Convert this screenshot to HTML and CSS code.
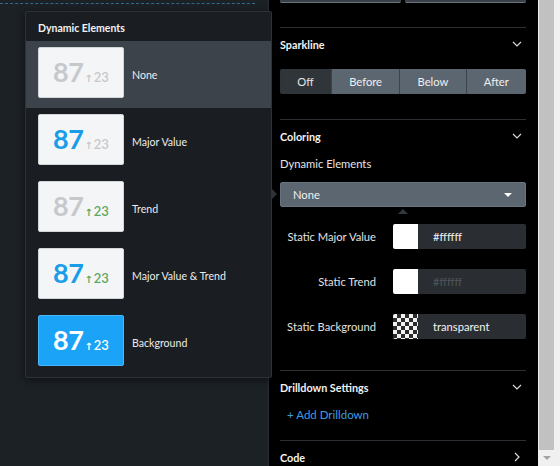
FILE: index.html
```html
<!DOCTYPE html>
<html lang="en">
<head>
    <meta charset="UTF-8">
    <title>Single Value Format</title>
    <link rel="stylesheet" href="styles.css">
</head>
<body>
    <div class="app">
        <!-- dashboard canvas -->
        <div class="canvas">
            <div class="canvas-sel"></div>
        </div>

        <!-- editor side panel -->
        <aside class="editor">
            <section class="sec sec-top">
                <div class="btn-pair">
                    <span class="btn"></span>
                    <span class="btn"></span>
                </div>
            </section>

            <section class="sec sec-spark">
                <div class="sec-head">
                    <span>Sparkline</span>
                    <svg class="chev" width="10" height="6" viewBox="0 0 10 6"><path d="M1 1l4 4 4-4" fill="none" stroke="#d8d8d8" stroke-width="1.2"/></svg>
                </div>
                <div class="seg">
                    <span class="seg-item active">Off</span>
                    <span class="seg-item">Before</span>
                    <span class="seg-item">Below</span>
                    <span class="seg-item">After</span>
                </div>
            </section>

            <section class="sec sec-color">
                <div class="sec-head">
                    <span>Coloring</span>
                    <svg class="chev" width="10" height="6" viewBox="0 0 10 6"><path d="M1 1l4 4 4-4" fill="none" stroke="#d8d8d8" stroke-width="1.2"/></svg>
                </div>
                <div class="field-label">Dynamic Elements</div>
                <div class="select">
                    <span>None</span>
                    <span class="caret"></span>
                </div>
                <div class="color-rows">
                    <div class="color-row">
                        <span class="row-label">Static Major Value</span>
                        <span class="swatch"></span>
                        <span class="hex">#ffffff</span>
                    </div>
                    <div class="color-row">
                        <span class="row-label">Static Trend</span>
                        <span class="swatch"></span>
                        <span class="hex dim">#ffffff</span>
                    </div>
                    <div class="color-row">
                        <span class="row-label">Static Background</span>
                        <span class="swatch checker"></span>
                        <span class="hex">transparent</span>
                    </div>
                </div>
            </section>

            <section class="sec sec-drill">
                <div class="sec-head">
                    <span>Drilldown Settings</span>
                    <svg class="chev" width="10" height="6" viewBox="0 0 10 6"><path d="M1 1l4 4 4-4" fill="none" stroke="#d8d8d8" stroke-width="1.2"/></svg>
                </div>
                <div class="add-link">+ Add Drilldown</div>
            </section>

            <section class="sec sec-code">
                <div class="sec-head">
                    <span>Code</span>
                    <svg class="chev-r" width="6" height="10" viewBox="0 0 6 10"><path d="M1 1l4 4-4 4" fill="none" stroke="#d8d8d8" stroke-width="1.2"/></svg>
                </div>
            </section>
        </aside>

        <div class="scrollbar">
            <div class="thumb"></div>
            <div class="scroll-down"></div>
        </div>
    </div>

    <!-- Dynamic elements popover -->
    <div class="pop">
        <div class="pop-head">Dynamic Elements</div>
        <div class="pop-item selected">
            <div class="tile"><span class="big">87</span><span class="trend"><i>↑</i>23</span></div>
            <span class="pop-label">None</span>
        </div>
        <div class="pop-item">
            <div class="tile t-major"><span class="big">87</span><span class="trend"><i>↑</i>23</span></div>
            <span class="pop-label">Major Value</span>
        </div>
        <div class="pop-item">
            <div class="tile t-trend"><span class="big">87</span><span class="trend"><i>↑</i>23</span></div>
            <span class="pop-label">Trend</span>
        </div>
        <div class="pop-item">
            <div class="tile t-major t-trend"><span class="big">87</span><span class="trend"><i>↑</i>23</span></div>
            <span class="pop-label">Major Value &amp; Trend</span>
        </div>
        <div class="pop-item">
            <div class="tile t-bg"><span class="big">87</span><span class="trend"><i>↑</i>23</span></div>
            <span class="pop-label">Background</span>
        </div>
        <span class="pop-arrow"></span>
    </div>
</body>
</html>
```

FILE: styles.css
```css
* {
    box-sizing: border-box;
}

body {
    margin: 0;
    background: #1c2126;
    font-family: Lato, 'Open Sans', sans-serif;
    color: #e8e8e8;
    overflow: hidden;
}

.app {
    display: flex;
    height: 466px;
}

/* Canvas behind the popover */
.canvas {
    width: 268px;
    background: #1c2126;
}

.canvas-sel {
    width: 255px;
    height: 4px;
    border-bottom: 1px dashed #35698c;
}

/* Editor panel */
.editor {
    width: 270px;
    background: #000;
    border-left: 1px solid #2a2f35;
    padding: 0 12px 0 11px;
}

.sec {
    border-bottom: 1px solid #2c3035;
}

.sec-top {
    height: 28px;
}

.btn-pair {
    display: flex;
    gap: 4px;
}

.btn {
    flex: 1;
    height: 3px;
    background: #3b4148;
    border-bottom: 1px solid #6c757e;
    border-radius: 0 0 2px 2px;
}

.sec-head {
    height: 32px;
    display: flex;
    align-items: center;
    justify-content: space-between;
    font-weight: 700;
    font-size: 10.8px;
    color: #f2f2f2;
}

.chev {
    margin-right: 4px;
}

.chev-r {
    margin-right: 6px;
}

.sec-spark {
    padding-bottom: 25px;
}

.seg {
    display: flex;
    margin-top: 9px;
    height: 25px;
}

.seg-item {
    flex: 1 1 auto;
    display: flex;
    align-items: center;
    justify-content: center;
    padding: 0 15px;
    background: #5c6670;
    border-left: 1px solid #3b434b;
    font-size: 11.2px;
    color: #eef0f2;
}

.seg-item:first-child {
    border-left: none;
    border-radius: 2px 0 0 2px;
}

.seg-item:last-child {
    border-radius: 0 2px 2px 0;
}

.seg-item.active {
    background: #30353a;
    color: #e4e4e4;
}

.sec-color {
    padding-bottom: 31px;
}

.field-label {
    margin-top: 4px;
    font-size: 11.2px;
    line-height: 16px;
    color: #e6e6e6;
}

.select {
    position: relative;
    margin-top: 10px;
    height: 25px;
    display: flex;
    align-items: center;
    justify-content: space-between;
    padding: 0 12px;
    background: #5c6670;
    border: 1px solid #6a747e;
    border-radius: 2px;
    font-size: 11.2px;
    color: #f0f0f0;
}

.select::after {
    /* pointer back to the open popover */
    content: '';
    position: absolute;
    left: 117px;
    bottom: -8px;
    border: 5px solid transparent;
    border-bottom-color: #33383e;
    border-top: none;
}

.caret {
    border: 4px solid transparent;
    border-top: 4px solid #fff;
    border-bottom: none;
    margin-right: 1px;
}

.color-rows {
    display: flex;
    flex-direction: column;
    gap: 20px;
    margin-top: 17px;
}

.color-row {
    display: flex;
    align-items: center;
    height: 25px;
}

.row-label {
    width: 96px;
    margin-right: 17px;
    text-align: right;
    font-size: 11.2px;
    color: #e2e2e2;
}

.swatch {
    width: 25px;
    height: 25px;
    background: #fff;
    border-radius: 2px 0 0 2px;
}

.swatch.checker {
    background: repeating-conic-gradient(#2b2b2b 0 25%, #f2f2f2 0 50%) 0 0 / 8px 8px;
}

.hex {
    flex: 1;
    height: 25px;
    display: flex;
    align-items: center;
    padding-left: 15px;
    background: #2a2e33;
    border-radius: 0 2px 2px 0;
    font-size: 11.2px;
    color: #f2f2f2;
}

.hex.dim {
    color: #4f555b;
}

.sec-drill {
    padding-bottom: 17px;
}

.add-link {
    margin-top: 4px;
    margin-left: 7px;
    font-size: 11.5px;
    line-height: 16px;
    color: #3a9de2;
}

.sec-code {
    border-bottom: none;
}

/* Browser scrollbar */
.scrollbar {
    width: 22px;
    background: #f0f0f0;
    display: flex;
    flex-direction: column;
    padding: 0 6px 0 1px;
}

.thumb {
    height: 450px;
    background: #c1c1c1;
}

.scroll-down {
    margin: 6px auto 0;
    border: 4px solid transparent;
    border-top: 4px solid #a3a3a3;
    border-bottom: none;
    width: 0;
}

/* Popover */
.pop {
    position: absolute;
    left: 25px;
    top: 11px;
    width: 247px;
    background: #1a1e22;
    border: 1px solid #2d3238;
    border-radius: 2px;
    box-shadow: 0 2px 8px rgba(0, 0, 0, 0.5);
    padding-bottom: 1px;
}

.pop-head {
    height: 29px;
    display: flex;
    align-items: center;
    padding: 2px 12px 0;
    font-weight: 700;
    font-size: 10.5px;
    color: #f2f2f2;
}

.pop-item {
    height: 67px;
    display: flex;
    align-items: flex-start;
    padding: 6px 12px 0;
    gap: 8px;
}

.pop-item.selected {
    background: #3c434a;
}

.pop-label {
    align-self: center;
    margin-top: -5px;
    font-size: 10.6px;
    color: #ececec;
}

.tile {
    width: 86px;
    height: 51px;
    display: flex;
    align-items: baseline;
    justify-content: center;
    padding-top: 8px;
    background: #f4f5f6;
    border: 1px solid #d2d5d8;
    border-radius: 2px;
    color: #c6c9cc;
}

.big {
    font-size: 27px;
    font-weight: 700;
    letter-spacing: -0.5px;
    line-height: 32px;
}

.trend {
    font-size: 13px;
    font-weight: 600;
    margin-left: 1px;
}

.trend i {
    font-style: normal;
    font-family: 'DejaVu Sans', sans-serif;
    font-size: 10px;
    margin-right: 1px;
}

.t-major .big {
    color: #1a9de8;
}

.t-trend .trend {
    color: #5fa85f;
}

.t-bg {
    background: #1aa3f7;
    border-color: #4bb6f5;
    color: #fff;
}

.pop-arrow {
    position: absolute;
    right: -6px;
    top: 177px;
    border: 5px solid transparent;
    border-left: 5px solid #2d3238;
    border-right: none;
}
```
